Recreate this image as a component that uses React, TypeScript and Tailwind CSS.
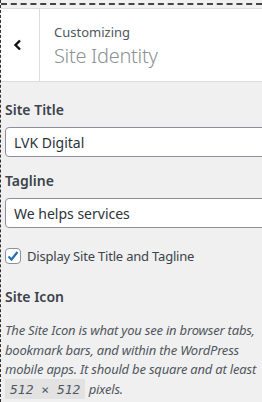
import React from "react"

const sans = { fontFamily: '"Noto Sans", "Open Sans", sans-serif' }

function Field({ label, value }: { label: string; value: string }) {
  return (
    <div>
      <div className="text-[14px] leading-[20px] font-semibold text-[#3c434a]">{label}</div>
      <div className="mt-[7px] -mr-[10px] h-[30px] rounded-[4px] border border-[#8c8f94] bg-white pl-[8px] flex items-center text-[14px] text-[#2c3338]">
        {value}
      </div>
    </div>
  )
}

export default function App() {
  return (
    <div
      className="w-[262px] h-[402px] overflow-hidden bg-[#f0f0f1] border-l border-dashed border-[#333]"
      style={sans}
    >
      {/* top strip */}
      <div className="h-[9px] pt-[3px] border-b border-[#dcdcde]">
        <div className="border-t-2 border-dashed border-[#444]" />
      </div>

      {/* header */}
      <div className="h-[73px] bg-white border-b border-[#dcdcde] flex">
        <div className="w-[39px] border-r border-[#dcdcde] flex items-center justify-center">
          <svg width="9" height="12" viewBox="0 0 9 12" className="ml-[-6px]">
            <polyline points="7,1.5 2.5,6 7,10.5" fill="none" stroke="#111" strokeWidth="2.4" />
          </svg>
        </div>
        <div className="pl-[14px] pt-[13px]">
          <div className="text-[13px] leading-[20px] text-[#50575e]">Customizing</div>
          <div className="text-[20px] leading-[28px] font-light tracking-[-0.3px] text-[#8c9196]">Site Identity</div>
        </div>
      </div>

      {/* body */}
      <div className="px-[4px] pt-[18px]">
        <Field label="Site Title" value="LVK Digital" />
        <div className="mt-[14px]">
          <Field label="Tagline" value="We helps services" />
        </div>

        <label className="mt-[20px] flex items-center gap-[6px]">
          <span className="w-[16px] h-[16px] rounded-[4px] border border-[#8c8f94] bg-white flex items-center justify-center">
            <svg width="14" height="14" viewBox="0 0 14 14">
              <polyline points="2.5,7.5 5.5,10.5 11.5,3" fill="none" stroke="#2271b1" strokeWidth="2.2" />
            </svg>
          </span>
          <span className="text-[13px] leading-[16px] tracking-[-0.2px] text-[#3c434a]">
            Display Site Title and Tagline
          </span>
        </label>

        <div className="mt-[23px] text-[14px] leading-[20px] font-semibold text-[#3c434a]">Site Icon</div>
        <p className="mt-[14px] text-[13px] leading-[19.5px] italic tracking-[-0.2px] text-[#50575e] -mr-[8px]">
          The Site Icon is what you see in browser tabs, bookmark bars, and within the WordPress mobile apps. It
          should be square and at least{" "}
          <code
            className="bg-[#e2e2e3] px-[5px] pt-[3px] pb-[2px] text-[13px] italic tracking-normal text-[#50575e]"
            style={{ fontFamily: '"DejaVu Sans Mono", monospace' }}
          >
            512 × 512
          </code>{" "}
          pixels.
        </p>
      </div>
    </div>
  )
}
